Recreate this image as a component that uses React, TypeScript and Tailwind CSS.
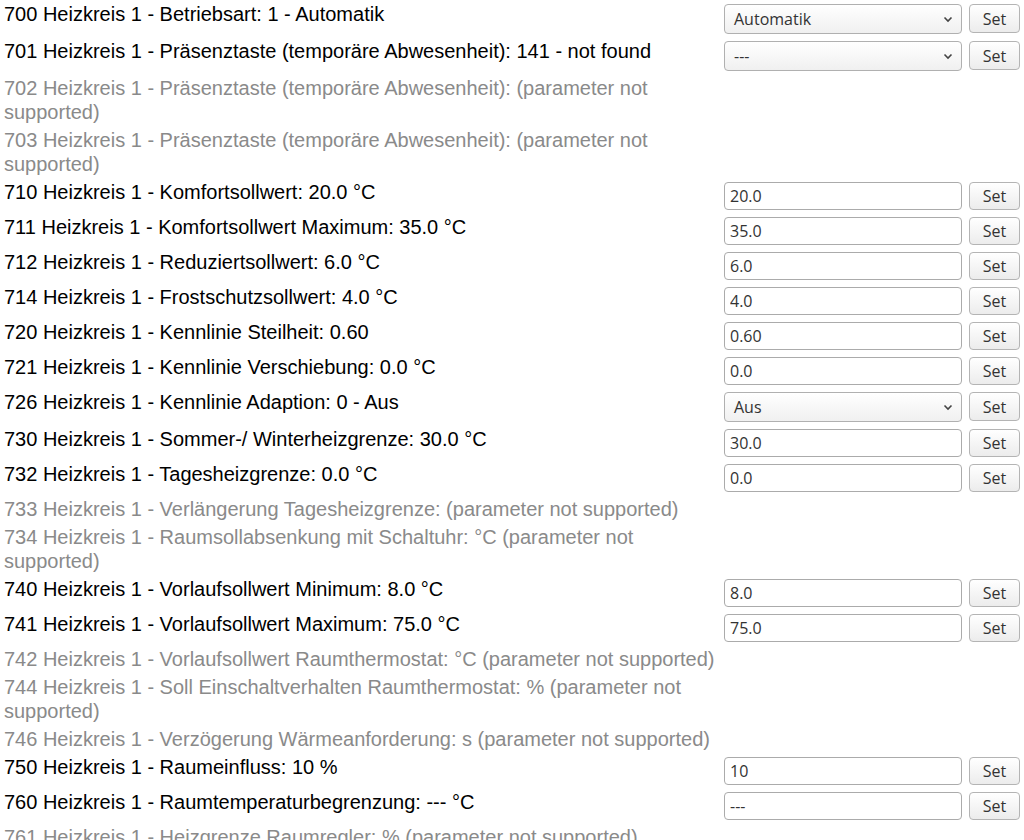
import React from 'react'

type Row = {
  text: string
  gray?: boolean
  kind?: 'select' | 'input'
  value?: string
}

const rows: Row[] = [
  { text: '700 Heizkreis 1 - Betriebsart: 1 - Automatik', kind: 'select', value: 'Automatik' },
  { text: '701 Heizkreis 1 - Präsenztaste (temporäre Abwesenheit): 141 - not found', kind: 'select', value: '---' },
  { text: '702 Heizkreis 1 - Präsenztaste (temporäre Abwesenheit): (parameter not supported)', gray: true },
  { text: '703 Heizkreis 1 - Präsenztaste (temporäre Abwesenheit): (parameter not supported)', gray: true },
  { text: '710 Heizkreis 1 - Komfortsollwert: 20.0 °C', kind: 'input', value: '20.0' },
  { text: '711 Heizkreis 1 - Komfortsollwert Maximum: 35.0 °C', kind: 'input', value: '35.0' },
  { text: '712 Heizkreis 1 - Reduziertsollwert: 6.0 °C', kind: 'input', value: '6.0' },
  { text: '714 Heizkreis 1 - Frostschutzsollwert: 4.0 °C', kind: 'input', value: '4.0' },
  { text: '720 Heizkreis 1 - Kennlinie Steilheit: 0.60', kind: 'input', value: '0.60' },
  { text: '721 Heizkreis 1 - Kennlinie Verschiebung: 0.0 °C', kind: 'input', value: '0.0' },
  { text: '726 Heizkreis 1 - Kennlinie Adaption: 0 - Aus', kind: 'select', value: 'Aus' },
  { text: '730 Heizkreis 1 - Sommer-/ Winterheizgrenze: 30.0 °C', kind: 'input', value: '30.0' },
  { text: '732 Heizkreis 1 - Tagesheizgrenze: 0.0 °C', kind: 'input', value: '0.0' },
  { text: '733 Heizkreis 1 - Verlängerung Tagesheizgrenze: (parameter not supported)', gray: true },
  { text: '734 Heizkreis 1 - Raumsollabsenkung mit Schaltuhr: °C (parameter not supported)', gray: true },
  { text: '740 Heizkreis 1 - Vorlaufsollwert Minimum: 8.0 °C', kind: 'input', value: '8.0' },
  { text: '741 Heizkreis 1 - Vorlaufsollwert Maximum: 75.0 °C', kind: 'input', value: '75.0' },
  { text: '742 Heizkreis 1 - Vorlaufsollwert Raumthermostat: °C (parameter not supported)', gray: true },
  { text: '744 Heizkreis 1 - Soll Einschaltverhalten Raumthermostat: % (parameter not supported)', gray: true },
  { text: '746 Heizkreis 1 - Verzögerung Wärmeanforderung: s (parameter not supported)', gray: true },
  { text: '750 Heizkreis 1 - Raumeinfluss: 10 %', kind: 'input', value: '10' },
  { text: '760 Heizkreis 1 - Raumtemperaturbegrenzung: --- °C', kind: 'input', value: '---' },
  { text: '761 Heizkreis 1 - Heizgrenze Raumregler: % (parameter not supported)', gray: true },
]

function SetButton({ tall }: { tall?: boolean }) {
  return (
    <button
      className={
        (tall ? 'h-[29px] ' : 'h-[28px] ') +
        "w-[51px] rounded-[4px] border border-[#b4b4b4] bg-gradient-to-b from-white to-[#ececec] text-[16px] text-[#333] font-['Open_Sans',sans-serif] leading-none"
      }
    >
      Set
    </button>
  )
}

function Control({ row }: { row: Row }) {
  if (row.kind === 'select') {
    return (
      <div className="flex h-[37px] items-center gap-[7px]">
        <div className="relative">
          <div className="flex h-[30px] w-[238px] items-center rounded-[4px] border border-[#b0b0b0] bg-gradient-to-b from-white to-[#f0f0f0] pl-[9px] text-[16px] text-[#333] font-['Open_Sans',sans-serif]">
            {row.value}
          </div>
          <svg className="absolute right-[9px] top-[12px]" width="10" height="7" viewBox="0 0 10 7">
            <path d="M1.5 1.5 L5 5 L8.5 1.5" fill="none" stroke="#444" strokeWidth="1.6" />
          </svg>
        </div>
        <SetButton tall />
      </div>
    )
  }
  return (
    <div className="flex h-[35px] items-center gap-[7px]">
      <input
        readOnly
        value={row.value}
        className="h-[28px] w-[238px] rounded-[4px] border border-[#ababab] bg-white px-[5px] text-[16px] text-[#333] font-['Open_Sans',sans-serif] outline-none"
      />
      <SetButton />
    </div>
  )
}

export default function App() {
  return (
    <div className="bg-white font-['Liberation_Sans',Arial,sans-serif]">
      <div className="grid grid-cols-[724px_1fr]">
        {rows.map((row) => (
          <React.Fragment key={row.text}>
            <div
              className={
                row.gray
                  ? 'pl-1 pr-1 py-[2px] text-[20px] leading-[24px] text-[#8a8a8a]'
                  : 'pl-1 pr-1 py-[2px] text-[20px] leading-[24px] text-black'
              }
            >
              {row.text}
            </div>
            <div>{row.kind ? <Control row={row} /> : null}</div>
          </React.Fragment>
        ))}
      </div>
    </div>
  )
}
